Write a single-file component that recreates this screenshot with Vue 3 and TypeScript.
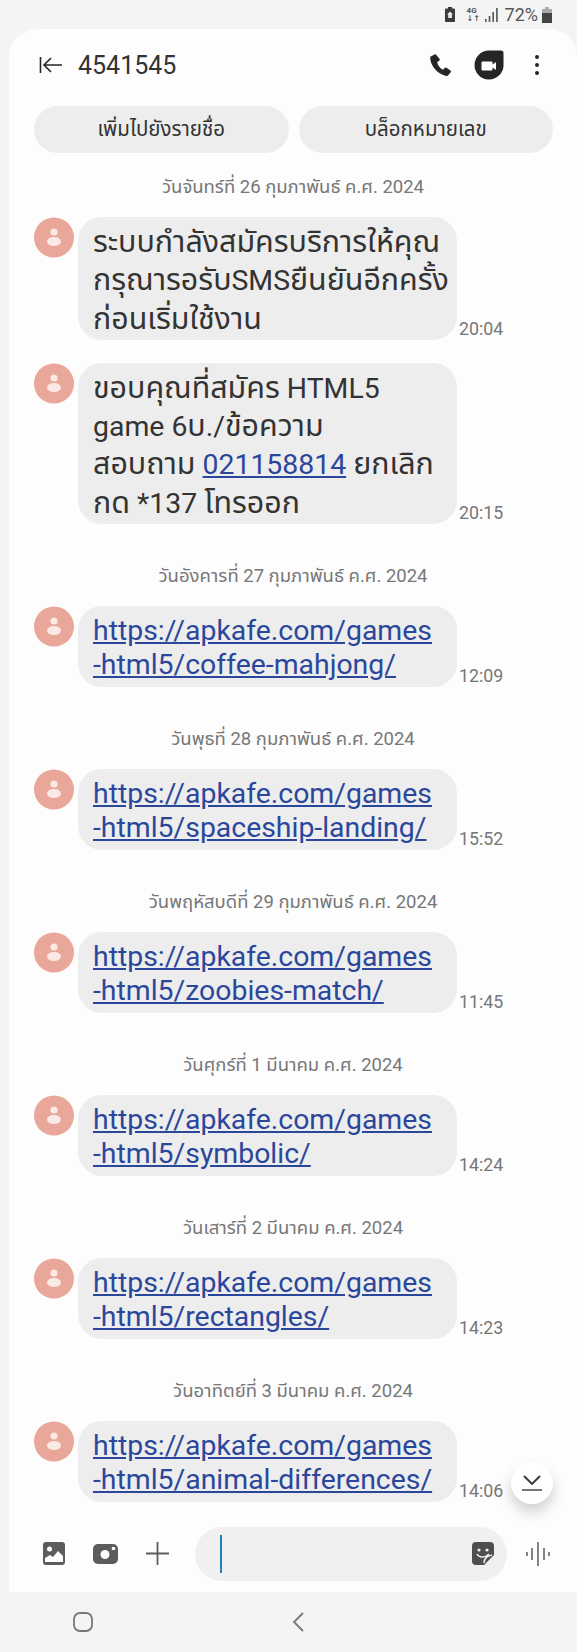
<script setup lang="ts">
type Part = { text: string; link?: boolean }
type Message = { lines: Part[][]; time: string; link?: boolean }
type Day = { date: string; messages: Message[] }

function urlMessage(tail: string, time: string): Message {
  return {
    link: true,
    time,
    lines: [[{ text: 'https://apkafe.com/games', link: true }], [{ text: tail, link: true }]],
  }
}

// the thai face on the phone runs wider than ours, so thai runs get their own size
function runs(text: string): { text: string; thai: boolean }[] {
  const found = text.match(/[\u0E00-\u0E7F]+|[^\u0E00-\u0E7F]+/g) ?? []
  return found.map((run) => ({ text: run, thai: /[\u0E00-\u0E7F]/.test(run) }))
}

const days: Day[] = [
  {
    date: 'วันจันทร์ที่ 26 กุมภาพันธ์ ค.ศ. 2024',
    messages: [
      {
        time: '20:04',
        lines: [
          [{ text: 'ระบบกำลังสมัครบริการให้คุณ' }],
          [{ text: 'กรุณารอรับSMSยืนยันอีกครั้ง' }],
          [{ text: 'ก่อนเริ่มใช้งาน' }],
        ],
      },
      {
        time: '20:15',
        lines: [
          [{ text: 'ขอบคุณที่สมัคร HTML5' }],
          [{ text: 'game 6บ./ข้อความ' }],
          [{ text: 'สอบถาม ' }, { text: '021158814', link: true }, { text: ' ยกเลิก' }],
          [{ text: 'กด *137 โทรออก' }],
        ],
      },
    ],
  },
  { date: 'วันอังคารที่ 27 กุมภาพันธ์ ค.ศ. 2024', messages: [urlMessage('-html5/coffee-mahjong/', '12:09')] },
  { date: 'วันพุธที่ 28 กุมภาพันธ์ ค.ศ. 2024', messages: [urlMessage('-html5/spaceship-landing/', '15:52')] },
  { date: 'วันพฤหัสบดีที่ 29 กุมภาพันธ์ ค.ศ. 2024', messages: [urlMessage('-html5/zoobies-match/', '11:45')] },
  { date: 'วันศุกร์ที่ 1 มีนาคม ค.ศ. 2024', messages: [urlMessage('-html5/symbolic/', '14:24')] },
  { date: 'วันเสาร์ที่ 2 มีนาคม ค.ศ. 2024', messages: [urlMessage('-html5/rectangles/', '14:23')] },
  { date: 'วันอาทิตย์ที่ 3 มีนาคม ค.ศ. 2024', messages: [urlMessage('-html5/animal-differences/', '14:06')] },
]
</script>

<template>
  <div class="screen">
    <div class="status">
      <svg class="st-lock" width="10" height="15" viewBox="0 0 10 15"><path d="M3 0h4v1.500h2a1 1 0 0 1 1 1V14a1 1 0 0 1-1 1H1a1 1 0 0 1-1-1V2.500a1 1 0 0 1 1-1h2z" fill="#3c3c3c"/><path d="M5 4.500 8 7.500H6.800V11H3.200V7.500H2z" fill="#eee"/></svg>
      <div class="st-net"><span>4G</span><span class="st-arrows">↓↑</span></div>
      <svg class="st-bars" width="13" height="14" viewBox="0 0 13 14"><path d="M0 11h1.600v3H0zM3.700 8h1.600v6H3.700zM7.400 4H9v10H7.400zM11.100 0h1.600v14h-1.600z" fill="#555"/></svg>
      <span class="st-pct">72%</span>
      <svg class="st-batt" width="10" height="16" viewBox="0 0 10 16"><path d="M3 0h4v2H3z" fill="#aaa"/><path d="M0 2h10v4H0z" fill="#aaa"/><path d="M0 6h10v10H0z" fill="#444"/></svg>
    </div>

    <div class="panel">
      <header class="head">
        <svg class="back" width="24" height="18" viewBox="0 0 24 18"><path d="M1.500 1v16M23 9H5M12 2 5 9l7 7" fill="none" stroke="#252525" stroke-width="1.600"/></svg>
        <span class="title">4541545</span>
        <svg class="phone" width="24" height="24" viewBox="0 0 24 24"><path d="M6.500 1.500 2.300 3.700C1.500 10 8 21.500 19.500 23l3.200-3.800a1.300 1.300 0 0 0-.3-1.800l-3.900-2.700a1.400 1.400 0 0 0-1.800.2l-1.800 1.900c-2.700-1.300-5-4.500-5.800-7.500l2.100-1.500a1.400 1.400 0 0 0 .4-1.800L8.300 2a1.300 1.300 0 0 0-1.800-.5z" fill="#252525"/></svg>
        <svg class="duo" width="30" height="31" viewBox="0 0 30 31"><path d="M15 .5h12a2.500 2.500 0 0 1 2.500 2.500v13a14.500 14.500 0 1 1-14.500-15.500z" fill="#252525"/><path d="M8.500 11.500h9a1 1 0 0 1 1 1v2l3.500-2.500v8l-3.500-2.500v2a1 1 0 0 1-1 1h-9a1 1 0 0 1-1-1v-7a1 1 0 0 1 1-1z" fill="#fff"/></svg>
        <svg class="more" width="6" height="22" viewBox="0 0 6 22"><circle cx="3" cy="3" r="2" fill="#252525"/><circle cx="3" cy="11" r="2" fill="#252525"/><circle cx="3" cy="19" r="2" fill="#252525"/></svg>
      </header>

      <div class="actions">
        <div class="action">เพิ่มไปยังรายชื่อ</div>
        <div class="action">บล็อกหมายเลข</div>
      </div>

      <div class="thread">
        <section v-for="day in days" :key="day.date" class="day">
          <div class="date">{{ day.date }}</div>
          <div v-for="msg in day.messages" :key="msg.time" class="msg">
            <svg class="avatar" width="40" height="41" viewBox="0 0 40 41">
              <circle cx="20" cy="20.500" r="20" fill="#e9a799"/>
              <circle cx="20" cy="15" r="3.600" fill="#fbe9e5"/>
              <ellipse cx="20" cy="24.500" rx="7" ry="4.500" fill="#fbe9e5"/>
            </svg>
            <div class="bubble" :class="{ url: msg.link }">
              <div v-for="(line, i) in msg.lines" :key="i" class="line">
                <template v-for="(part, j) in line" :key="j">
                  <a v-if="part.link" class="link">{{ part.text }}</a>
                  <template v-else>
                    <span v-for="(run, k) in runs(part.text)" :key="k" :class="{ th: run.thai }">{{ run.text }}</span>
                  </template>
                </template>
              </div>
            </div>
            <span class="time">{{ msg.time }}</span>
          </div>
        </section>
      </div>

      <div class="composer">
        <svg class="c-gal" width="22" height="23" viewBox="0 0 22 23"><rect width="22" height="23" rx="3" fill="#5c5c5c"/><circle cx="6.500" cy="7" r="2.500" fill="#fff"/><path d="M2 20v-4l5-3 3 2 5-6 5 5v6z" fill="#fff"/></svg>
        <svg class="c-cam" width="25" height="20" viewBox="0 0 25 20"><rect width="25" height="20" rx="5" fill="#5c5c5c"/><circle cx="12" cy="10.500" r="4.500" fill="#fff"/><circle cx="20.500" cy="4.500" r="1.800" fill="#fff"/></svg>
        <svg class="c-plus" width="23" height="23" viewBox="0 0 23 23"><path d="M11.500 0v23M0 11.500h23" stroke="#5c5c5c" stroke-width="1.800"/></svg>
        <div class="input">
          <span class="caret"></span>
          <svg class="sticker" width="22" height="23" viewBox="0 0 22 23"><path d="M4 0h14a4 4 0 0 1 4 4v9l-10 10H4a4 4 0 0 1-4-4V4a4 4 0 0 1 4-4z" fill="#4e4e4e"/><circle cx="7" cy="8" r="1.600" fill="#eee"/><circle cx="15" cy="8" r="1.600" fill="#eee"/><path d="M5 12c2 4 8 4 12 0M12 21c0-5 3-7 8-8" fill="none" stroke="#eee" stroke-width="1.500"/></svg>
        </div>
        <svg class="c-wave" width="24" height="24" viewBox="0 0 24 24"><path d="M1 10v4M6 6v12M12 0v24M18 6v12M23 10v4" stroke="#5c5c5c" stroke-width="1.500" fill="none"/></svg>
      </div>

      <div class="down">
        <svg width="22" height="16" viewBox="0 0 22 16"><path d="M3 1l8 8 8-8" fill="none" stroke="#333" stroke-width="1.800"/><path d="M1 15h20" stroke="#666" stroke-width="1.800"/></svg>
      </div>
    </div>

    <nav class="nav">
      <svg width="20" height="20" viewBox="0 0 20 20"><rect x="1" y="1" width="18" height="18" rx="6" fill="none" stroke="#777" stroke-width="1.800"/></svg>
      <svg width="12" height="20" viewBox="0 0 12 20"><path d="M11 1 2 10l9 9" fill="none" stroke="#777" stroke-width="1.800"/></svg>
    </nav>
  </div>
</template>

<style>
html, body { margin: 0; background: #f4f4f4; }
</style>

<style scoped>
.screen {
  width: 577px;
  height: 1652px;
  background: #f4f4f4;
  font-family: Roboto, "Noto Sans", "Noto Sans Thai", "DejaVu Sans", sans-serif;
  color: #333;
  overflow: hidden;
}
.status {
  height: 29px;
  display: flex;
  align-items: center;
  justify-content: flex-end;
  padding-right: 25px;
  color: #555;
}
.st-net { display: flex; flex-direction: column; font-size: 8px; line-height: 8px; font-weight: 700; margin-left: 12px; width: 11px; }
.st-arrows { font-size: 8px; }
.st-bars { margin-left: 7px; }
.st-pct { font-size: 18px; margin-left: 7px; }
.st-batt { margin-left: 4px; }
.panel {
  position: relative;
  margin-left: 9px;
  height: 1563px;
  background: #fdfdfd;
  border-radius: 28px 28px 0 0;
  display: flex;
  flex-direction: column;
}
.head {
  display: flex;
  align-items: center;
  flex-shrink: 0;
  height: 72px;
  padding: 0 37px 0 30px;
}
.title { font-size: 25px; margin-left: 15px; flex: 1; }
.phone { margin-right: 22px; }
.duo { margin-right: 30px; }
.actions {
  display: flex;
  flex-shrink: 0;
  gap: 10px;
  padding: 5px 24px 5px 25px;
}
.action {
  flex: 1;
  height: 47px;
  border-radius: 24px;
  background: #ededed;
  display: flex;
  align-items: center;
  justify-content: center;
  font-size: 20.500px;
}
.thread { flex: 1; min-height: 0; padding: 0 25px; }
.day { padding-top: 17px; }
.date {
  text-align: center;
  font-size: 18.500px;
  line-height: 24px;
  color: #777;
  margin-bottom: 18px;
}
.msg {
  display: flex;
  align-items: flex-end;
  margin-bottom: 23px;
  position: relative;
  padding-left: 44px;
}
.avatar { position: absolute; left: 0; top: 0; }
.bubble {
  width: 379px;
  box-sizing: border-box;
  background: #ededed;
  border-radius: 24px;
  padding: 7px 15px 1px;
  font-size: 28.400px;
  line-height: 38.300px;
  white-space: nowrap;
}
.th { font-size: 30.400px; line-height: 1; }
.bubble.url { padding: 8px 15px 5px; line-height: 34px; }
.link { color: #2b479c; text-decoration: underline; }
.time { font-size: 17.800px; color: #777; margin-left: 2px; line-height: 22px; }
.composer {
  display: flex;
  align-items: center;
  flex-shrink: 0;
  box-sizing: border-box;
  height: 66px;
  padding: 0 27px 11px 34px;
}
.c-cam { margin-left: 28px; }
.c-plus { margin-left: 28px; }
.input {
  flex: 1;
  height: 54px;
  margin-left: 26px;
  border-radius: 27px;
  background: #f0f0f0;
  display: flex;
  align-items: center;
  justify-content: space-between;
  padding: 0 13px 0 25px;
}
.caret { width: 2px; height: 38px; background: #1b84b8; }
.c-wave { margin-left: 19px; }
.down {
  position: absolute;
  right: 24px;
  top: 1433px;
  width: 42px;
  height: 42px;
  border-radius: 50%;
  background: #fff;
  box-shadow: 0 8px 14px rgba(0, 0, 0, 0.18);
  display: flex;
  align-items: center;
  justify-content: center;
}
.nav {
  height: 60px;
  display: flex;
  align-items: center;
  padding-left: 73px;
  gap: 199px;
}
</style>
